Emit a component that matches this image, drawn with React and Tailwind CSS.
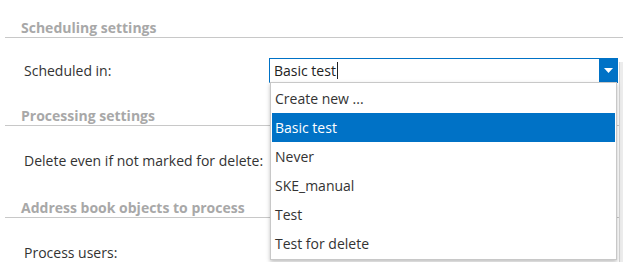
import { useState } from "react"

const options = ["Create new ...", "Basic test", "Never", "SKE_manual", "Test", "Test for delete"]

function SectionHeader({ title }) {
  return (
    <div className="ml-[5px] h-[23px] border-b border-[#c8c8c8] pl-4">
      <span className="text-[14px] font-bold leading-[22px] text-[#a8a8a8]">{title}</span>
    </div>
  )
}

function Row({ label, height, children }) {
  return (
    <div className={`flex items-center ${height}`}>
      <div className="w-[269px] shrink-0 whitespace-nowrap pl-6 text-[14px] text-[#333]">{label}</div>
      {children}
    </div>
  )
}

export default function App() {
  const [selected] = useState("Basic test")

  return (
    <div className="relative h-[262px] w-[623px] overflow-hidden bg-white font-['Open_Sans',sans-serif]">
      <div className="pt-[15px]">
        <SectionHeader title="Scheduling settings" />
        <Row label="Scheduled in:" height="h-[65px]">
          <div className="relative h-[25px] w-[349px] shrink-0">
            <div className="flex h-full items-center border border-[#0072c6] border-b-[#b9c4ce] bg-white pl-[4px] pr-[20px] text-[14px] text-[#222]">
              <span>{selected}</span>
              <span className="ml-px h-[17px] w-px bg-[#222]" />
            </div>
            <div className="absolute right-0 top-0 flex h-[25px] w-[19px] items-center justify-center bg-[#0072c6]">
              <svg width="9" height="5" viewBox="0 0 9 5">
                <path d="M0 0h9L4.5 5z" fill="white" />
              </svg>
            </div>
          </div>
        </Row>
        <SectionHeader title="Processing settings" />
        <Row label="Delete even if not marked for delete:" height="h-[69px]" />
        <SectionHeader title="Address book objects to process" />
        <Row label="Process users:" height="h-[69px]" />
      </div>

      {/* right edge strip */}
      <div className="absolute right-0 top-[62px] h-[200px] w-[4px] border-l border-[#d4d4d4] bg-[#ececec]" />

      {/* open dropdown list */}
      <div className="absolute left-[270px] top-[82px] h-[178px] w-[347px] border border-[#c8c8c8] bg-white px-px pt-[1px] shadow-[0_2px_4px_rgba(0,0,0,0.25)]">
        {options.map((opt) => (
          <div
            key={opt}
            className={`flex h-[29px] items-center pl-[3px] text-[14px] ${
              opt === selected ? "bg-[#0072c6] text-white" : "text-[#333]"
            }`}
          >
            {opt}
          </div>
        ))}
      </div>
    </div>
  )
}
